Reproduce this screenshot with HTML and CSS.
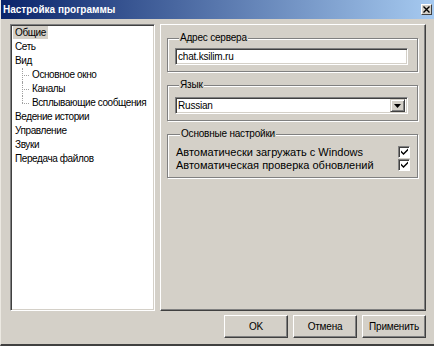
FILE: index.html
```html
<!DOCTYPE html>
<html>
<head>
<meta charset="utf-8">
<link rel="stylesheet" href="styles.css">
</head>
<body>
<div class="window">
  <div class="titlebar">
    <span class="title">Настройка программы</span>
    <span class="close"><svg width="7" height="7" viewBox="0 0 7 7"><path d="M0.5 0.5L6.5 6.5M6.5 0.5L0.5 6.5" stroke="#000" stroke-width="1.4"/></svg></span>
  </div>
  <div class="content">
    <div class="tree">
      <div class="item"><span class="sel">Общие</span></div>
      <div class="item"><span>Сеть</span></div>
      <div class="item"><span>Вид</span></div>
      <div class="item child"><span>Основное окно</span></div>
      <div class="item child"><span>Каналы</span></div>
      <div class="item child last"><span>Всплывающие сообщения</span></div>
      <div class="item"><span>Ведение истории</span></div>
      <div class="item"><span>Управление</span></div>
      <div class="item"><span>Звуки</span></div>
      <div class="item"><span>Передача файлов</span></div>
    </div>
    <div class="panel">
      <fieldset class="group addr">
        <legend>Адрес сервера</legend>
        <div class="field">chat.ksilim.ru</div>
      </fieldset>
      <fieldset class="group lang">
        <legend>Язык</legend>
        <div class="field combo"><span class="value">Russian</span><span class="drop"><svg width="7" height="4" viewBox="0 0 7 4"><path d="M0 0H7L3.5 4Z" fill="#000"/></svg></span></div>
      </fieldset>
      <fieldset class="group opts">
        <legend>Основные настройки</legend>
        <div class="row"><span>Автоматически загружать с Windows</span><span class="check"><svg width="7" height="7" viewBox="0 0 7 7"><path d="M0 2.5L2.5 5L7 0.5V2.5L2.5 7L0 4.5Z" fill="#000"/></svg></span></div>
        <div class="row"><span>Автоматическая проверка обновлений</span><span class="check"><svg width="7" height="7" viewBox="0 0 7 7"><path d="M0 2.5L2.5 5L7 0.5V2.5L2.5 7L0 4.5Z" fill="#000"/></svg></span></div>
      </fieldset>
    </div>
  </div>
  <div class="buttons">
    <button class="btn">OK</button>
    <button class="btn">Отмена</button>
    <button class="btn">Применить</button>
  </div>
</div>
</body>
</html>
```
FILE: styles.css
```css
html, body {
  margin: 0;
  padding: 0;
}
body {
  width: 434px;
  height: 346px;
  overflow: hidden;
  background: #d4d0c8;
  font-family: "Liberation Sans", Arial, sans-serif;
  font-size: 10px;
  letter-spacing: -0.2px;
  color: #000;
}
.window {
  width: 434px;
  height: 346px;
  box-sizing: border-box;
  border-left: 1px solid #ece9e2;
  border-bottom: 2px solid #404040;
  display: flex;
  flex-direction: column;
}
.titlebar {
  height: 19px;
  background: linear-gradient(to right, #0a246a, #a6caf0);
  display: flex;
  align-items: center;
  justify-content: space-between;
  padding: 0 2px 0 2px;
}
.title {
  color: #fff;
  font-weight: bold;
  font-size: 10px;
  letter-spacing: 0;
}
.close {
  width: 9px;
  height: 9px;
  background: #d4d0c8;
  border: 1px solid;
  border-color: #fff #404040 #404040 #fff;
  display: flex;
  align-items: center;
  justify-content: center;
}
.content {
  display: flex;
  gap: 5px;
  padding: 5px 8px 0 9px;
}
.tree {
  width: 145px;
  height: 287px;
  box-sizing: border-box;
  background: #fff;
  border: 1px solid;
  border-color: #808080 #fff #fff #808080;
  box-shadow: inset 1px 1px 0 #404040, inset -1px -1px 0 #d4d0c8;
  padding: 1px 0 0 2px;
  letter-spacing: -0.4px;
}
.item {
  height: 14px;
  line-height: 14px;
  white-space: nowrap;
  position: relative;
}
.item span {
  padding: 0 2px;
  display: inline-block;
  line-height: 13px;
}
.item .sel {
  background: #d4d0c8;
}
.child {
  padding-left: 17px;
}
.child::before {
  content: "";
  position: absolute;
  left: 9px;
  top: 7px;
  width: 7px;
  border-top: 1px dotted #a0a0a0;
}
.child::after {
  content: "";
  position: absolute;
  left: 9px;
  top: 0;
  height: 14px;
  border-left: 1px dotted #a0a0a0;
}
.child.last::after {
  height: 7px;
}
.panel {
  width: 266px;
  height: 287px;
  box-sizing: border-box;
  border: 1px solid;
  border-color: #fff #404040 #404040 #fff;
  box-shadow: inset -1px -1px 0 #808080;
  padding: 7px 7px 0 6px;
  display: flex;
  flex-direction: column;
  gap: 7px;
}
.group {
  margin: 0;
  border: 1px solid #808080;
  box-shadow: inset 1px 1px 0 #fff, 1px 1px 0 #fff;
  min-inline-size: 0;
}
.group legend {
  padding: 0 1px;
  margin-left: 4px;
  line-height: 12px;
  background: #d4d0c8;
}
.addr {
  padding: 4px 9px 6px 7px;
}
.lang {
  padding: 6px 9px 6px 7px;
}
.opts {
  padding: 5px 7px 6px 8px;
}
.field {
  height: 17px;
  box-sizing: border-box;
  background: #fff;
  border: 1px solid;
  border-color: #808080 #fff #fff #808080;
  box-shadow: inset 1px 1px 0 #404040, inset -1px -1px 0 #d4d0c8;
  padding: 0 2px;
  line-height: 15px;
}
.combo {
  display: flex;
  justify-content: space-between;
  align-items: center;
  padding-right: 2px;
}
.drop {
  width: 15px;
  height: 13px;
  box-sizing: border-box;
  background: #d4d0c8;
  border: 1px solid;
  border-color: #d4d0c8 #404040 #404040 #d4d0c8;
  box-shadow: inset 1px 1px 0 #fff, inset -1px -1px 0 #808080;
  display: flex;
  align-items: center;
  justify-content: center;
}
.row {
  display: flex;
  justify-content: space-between;
  align-items: center;
  height: 13px;
  font-size: 11px;
  letter-spacing: 0;
}
.check {
  width: 12px;
  height: 12px;
  box-sizing: border-box;
  background: #fff;
  border: 1px solid;
  border-color: #808080 #fff #fff #808080;
  box-shadow: inset 1px 1px 0 #404040;
  display: flex;
  align-items: center;
  justify-content: center;
}
.buttons {
  display: flex;
  justify-content: flex-end;
  gap: 5px;
  padding: 4px 8px 0 0;
}
.btn {
  width: 64px;
  height: 23px;
  box-sizing: border-box;
  background: #d4d0c8;
  font-family: "Liberation Sans", Arial, sans-serif;
  font-size: 10px;
  letter-spacing: -0.2px;
  color: #000;
  border: 1px solid;
  border-color: #fff #404040 #404040 #fff;
  box-shadow: inset -1px -1px 0 #808080;
  padding: 0;
}
```
